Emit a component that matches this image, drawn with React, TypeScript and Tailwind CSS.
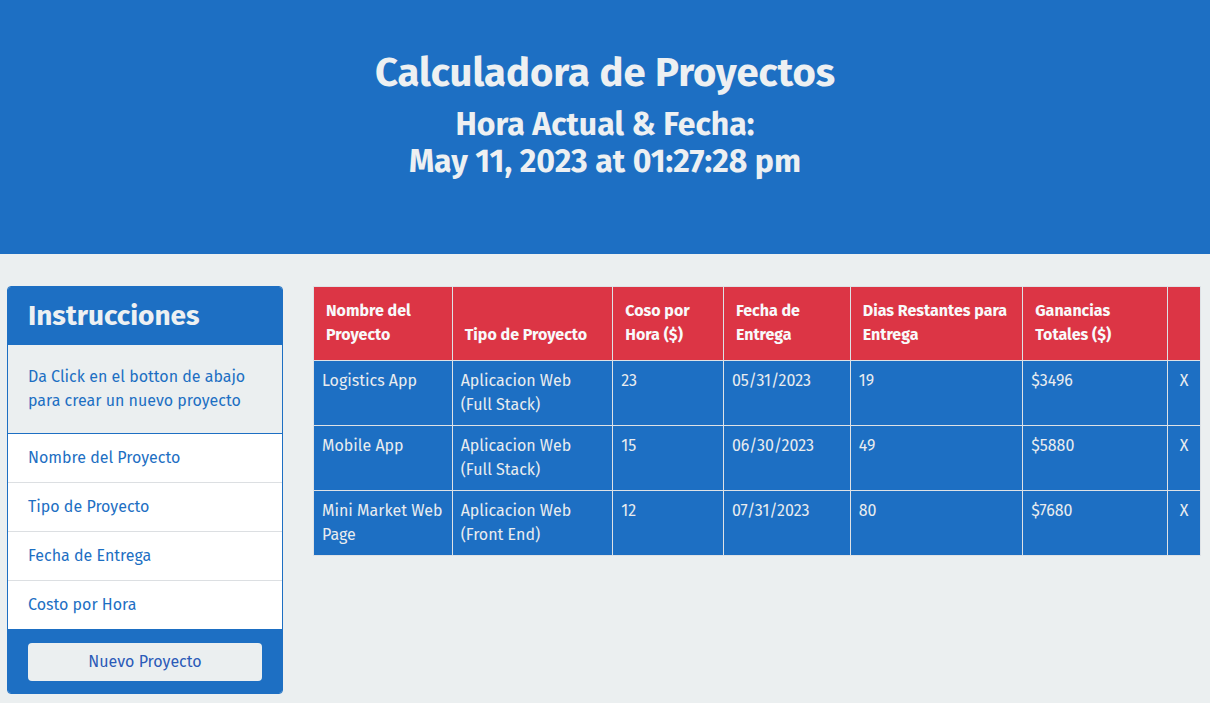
type Project = {
  name: string;
  type: string;
  rate: string;
  due: string;
  days: string;
  total: string;
};

const projects: Project[] = [
  { name: "Logistics App", type: "Aplicacion Web (Full Stack)", rate: "23", due: "05/31/2023", days: "19", total: "$3496" },
  { name: "Mobile App", type: "Aplicacion Web (Full Stack)", rate: "15", due: "06/30/2023", days: "49", total: "$5880" },
  { name: "Mini Market Web Page", type: "Aplicacion Web (Front End)", rate: "12", due: "07/31/2023", days: "80", total: "$7680" },
];

const fields = ["Nombre del Proyecto", "Tipo de Proyecto", "Fecha de Entrega", "Costo por Hora"];

const headers = [
  { label: "Nombre del Proyecto", w: "w-[139px]" },
  { label: "Tipo de Proyecto", w: "w-[161px]" },
  { label: "Coso por Hora ($)", w: "w-[111px]" },
  { label: "Fecha de Entrega", w: "w-[127px]" },
  { label: "Dias Restantes para Entrega", w: "w-[173px]" },
  { label: "Ganancias Totales ($)", w: "w-[145px]" },
  { label: "", w: "w-[33px]" },
];

export default function App() {
  return (
    <div className="min-h-[703px] bg-[#ebeff0] font-['Fira_Sans','Noto_Sans',sans-serif] text-base leading-6">
      <header className="h-[254px] bg-[#1d6fc3] pt-[49px] text-center text-[#edf0f2]">
        <h1 className="mb-[9px] text-[40px] font-bold leading-[48px]">Calculadora de Proyectos</h1>
        <h2 className="text-[32px] font-bold leading-[37px]">
          Hora Actual &amp; Fecha:
          <br />
          May 11, 2023 at 01:27:28 pm
        </h2>
      </header>

      <main className="flex items-start gap-[30px] pl-[7px] pr-[9px] pt-8">
        <aside className="w-[276px] shrink-0 overflow-hidden rounded border border-[#1d6fc3]">
          <div className="bg-[#1d6fc3] px-5 py-3 text-[28px] font-bold leading-[34px] text-[#edf0f2]">
            Instrucciones
          </div>
          <p className="border-b border-[#1d6fc3] bg-[#ebeff0] px-5 pb-[20px] pt-[20px] text-[#1d6fc3]">
            Da Click en el botton de abajo para crear un nuevo proyecto
          </p>
          <ul className="bg-white text-[#1d6fc3]">
            {fields.map((f) => (
              <li key={f} className="border-b border-[#dcdfe2] px-5 py-3 last:border-b-0">
                {f}
              </li>
            ))}
          </ul>
          <div className="border-t border-[#1d6fc3] bg-[#1d6fc3] px-5 pb-3 pt-[13px]">
            <button
              type="button"
              className="h-[38px] w-full rounded bg-[#ebeff0] text-[#2b5bb8]"
            >
              Nuevo Proyecto
            </button>
          </div>
        </aside>

        <table className="flex-1 border-collapse border border-[#dee2e6] text-left">
          <thead>
            <tr className="bg-[#dc3545] text-[#f8f9fa]">
              {headers.map((h, i) => (
                <th
                  key={i}
                  className={`${h.w} border border-[#dee2e6] px-3 pb-[13px] pt-3 align-bottom font-bold`}
                >
                  {h.label}
                </th>
              ))}
            </tr>
          </thead>
          <tbody>
            {projects.map((p) => (
              <tr key={p.name} className="bg-[#1d6fc3] align-top text-[#e9ecef]">
                <td className="border border-[#dee2e6] px-2 py-2">{p.name}</td>
                <td className="border border-[#dee2e6] px-2 py-2">{p.type}</td>
                <td className="border border-[#dee2e6] px-2 py-2">{p.rate}</td>
                <td className="border border-[#dee2e6] px-2 py-2">{p.due}</td>
                <td className="border border-[#dee2e6] px-2 py-2">{p.days}</td>
                <td className="border border-[#dee2e6] px-2 py-2">{p.total}</td>
                <td className="border border-[#dee2e6] px-2 py-2 text-center">X</td>
              </tr>
            ))}
          </tbody>
        </table>
      </main>
    </div>
  );
}
